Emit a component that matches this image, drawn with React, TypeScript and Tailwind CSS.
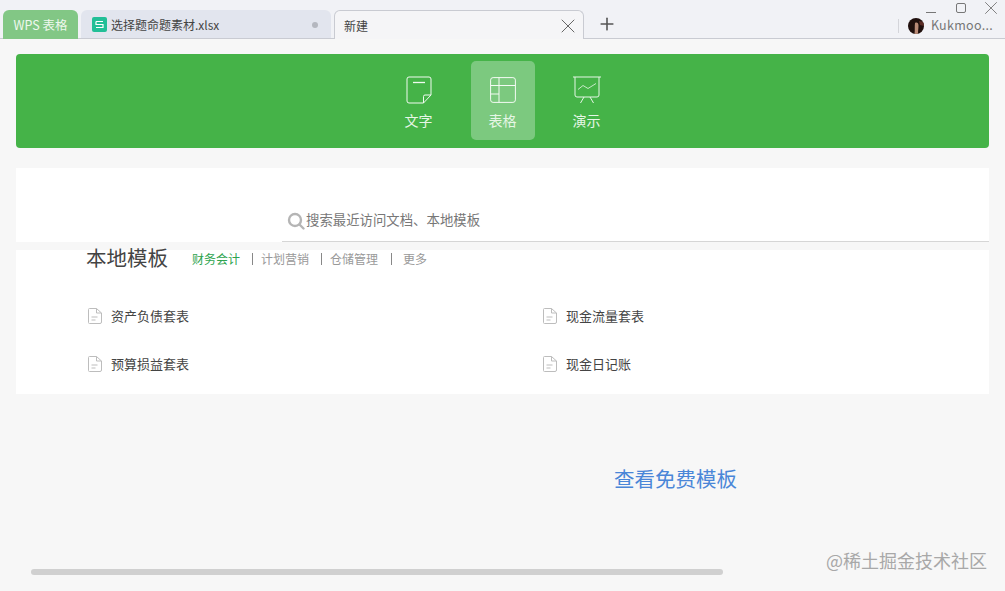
import { Plus, X } from "lucide-react";

const FONT = "font-['Noto_Sans_CJK_SC','Noto_Sans',sans-serif]";

function WriterIcon() {
  return (
    <svg width="26" height="28" viewBox="0 0 26 28" fill="none" stroke="#f0faf0" strokeWidth="1">
      <path d="M3 1h20a2 2 0 0 1 2 2v16l-7.5 8H3a2 2 0 0 1-2-2V3a2 2 0 0 1 2-2z" />
      <path d="M25 19h-6a1.5 1.5 0 0 0-1.5 1.5V27" />
      <path d="M7 6.500h12" strokeWidth="1.3" />
    </svg>
  );
}

function SheetIcon() {
  return (
    <svg width="26" height="26" viewBox="0 0 26 26" fill="none" stroke="#f4fbf4" strokeWidth="1">
      <rect x="0.6" y="0.6" width="24.8" height="24.8" rx="2.5" />
      <path d="M0.6 8.5h24.8M0.6 17h8.4M9 0.6v24.8" />
    </svg>
  );
}

function SlideIcon() {
  return (
    <svg width="30" height="28" viewBox="0 0 30 28" fill="none" stroke="#e6f6e6" strokeWidth="1">
      <path d="M1 1h28" />
      <path d="M3 1v18a2 2 0 0 0 2 2h20a2 2 0 0 0 2-2V1" />
      <path d="M6 13.5l5-4 5 3 8-5" strokeOpacity="0.8" />
      <path d="M12 21l-3.5 6M18 21l3.5 6" />
    </svg>
  );
}

function FileIcon() {
  return (
    <svg width="14" height="16" viewBox="0 0 14 16" fill="none" stroke="#bdbdbd" strokeWidth="1" className="shrink-0">
      <path d="M1.5 0.5h7l5 4.5v9a1.5 1.5 0 0 1-1.5 1.500H1.500A1 1 0 0 1 0.5 14.5v-13a1 1 0 0 1 1-1z" />
      <path d="M8.5 0.5v4.5h5" />
      <path d="M3.5 9h6M3.5 12h4" />
    </svg>
  );
}

function SheetBadge() {
  return (
    <svg width="15" height="15" viewBox="0 0 15 15" className="shrink-0">
      <rect width="15" height="15" rx="2" fill="#22bf97" />
      <path d="M4 4.500h7M4 4.500v3h7v3H4" fill="none" stroke="#ffffff" strokeWidth="1.2" />
    </svg>
  );
}

function Avatar() {
  return (
    <svg width="16" height="16" viewBox="0 0 16 16" className="shrink-0">
      <clipPath id="avatar-clip">
        <circle cx="8" cy="8" r="8" />
      </clipPath>
      <g clipPath="url(#avatar-clip)">
        <rect width="16" height="16" fill="#20100e" />
        <path d="M7 5c2-1 3.500 0 3.500 2.500S10 12 10 16H6.500c.5-3 0-8 .5-11z" fill="#b98a76" />
        <path d="M11 3l5 1v4l-4-1z" fill="#5b2c26" />
      </g>
    </svg>
  );
}

function AppButton({ label, active, children }: { label: string; active?: boolean; children: React.ReactNode }) {
  return (
    <div className={`flex h-[79px] w-16 flex-col items-center rounded-[5px] pt-[14px] ${active ? "bg-[#7cc97f]" : ""}`}>
      <div className="flex h-[30px] items-center justify-center">{children}</div>
      <span className="mt-[5px] text-[14px] leading-[20px] text-[#e6f6e6]">{label}</span>
    </div>
  );
}

function TemplateRow({ name }: { name: string }) {
  return (
    <div className="flex h-12 items-center gap-[9px] pl-[2px]">
      <FileIcon />
      <span className="text-[13px] text-[#444444]">{name}</span>
    </div>
  );
}

export default function App() {
  return (
    <div className={`relative flex h-[591px] w-[1005px] flex-col overflow-hidden bg-[#f7f7f7] ${FONT}`}>
      {/* title bar + tabs */}
      <div className="relative flex h-[39px] shrink-0 items-end border-b border-[#c9cbd2] bg-[#f1f2f6] pl-[3px]">
        <div className="mb-[-1px] flex h-[29px] w-[75px] items-center justify-center rounded-t-[6px] bg-[#82c785] pt-[2px] text-[12.5px] text-[#eef8ee]">
          WPS 表格
        </div>
        <div className="mb-[-1px] ml-[3px] flex h-[29px] w-[250px] items-center rounded-t-[6px] border-b border-[#c9cbd2] bg-[#e2e5ee] pl-[11px] pr-[13px] pt-[1px]">
          <SheetBadge />
          <span className="ml-[4px] text-[12px] text-[#444444]">选择题命题素材.xlsx</span>
          <div className="ml-auto h-[6px] w-[6px] rounded-full bg-[#b4b7bf]" />
        </div>
        <div className="mb-[-1px] ml-[3px] flex h-[29px] w-[250px] items-center rounded-t-[6px] border border-b-0 border-[#c9cbd2] bg-[#f5f5f7] pl-[9px] pr-[3px] pt-[1px]">
          <span className="text-[12px] text-[#444444]">新建</span>
          <X size={24} strokeWidth={1} className="ml-auto text-[#666666]" />
        </div>
        <div className="flex h-[29px] w-[46px] items-center justify-center">
          <Plus size={20} strokeWidth={1.9} className="text-[#555555]" />
        </div>
        <div className="ml-auto flex h-[29px] items-center pr-[12px] pt-[4px]">
          <div className="h-[14px] w-px bg-[#d4d5da]" />
          <div className="ml-[9px]">
            <Avatar />
          </div>
          <span className="ml-[7px] text-[12.5px] tracking-[0.3px] text-[#777777]">Kukmoo...</span>
        </div>
        {/* window controls */}
        <div className="absolute right-[3px] top-[-3px] flex items-center gap-[14px] text-[#777777]">
          <div className="mt-[8px] mr-[6px] h-px w-[10px] bg-[#777777]" />
          <div className="h-[10px] w-[10px] rounded-[2px] border border-[#777777]" />
          <X size={22} strokeWidth={1} />
        </div>
      </div>

      {/* green app switcher */}
      <div className="mx-4 mt-[15px] flex h-[94px] shrink-0 items-start justify-center gap-5 rounded-[4px] bg-[#45b348] pt-[7px]">
        <AppButton label="文字">
          <WriterIcon />
        </AppButton>
        <AppButton label="表格" active>
          <SheetIcon />
        </AppButton>
        <AppButton label="演示">
          <SlideIcon />
        </AppButton>
      </div>

      {/* search */}
      <div className="mx-4 mt-5 flex h-[74px] shrink-0 items-end bg-white pl-[266px]">
        <div className="flex h-[43px] flex-1 items-center border-b border-[#d6d6d6] pb-[2px] pl-[5px]">
          <svg width="18" height="18" viewBox="0 0 18 18" fill="none" stroke="#b5b5b5" strokeWidth="2.4" className="mt-[4px]">
            <circle cx="8" cy="8" r="6" />
            <path d="M12.5 12.5l4 4" strokeLinecap="round" />
          </svg>
          <span className="ml-[1px] text-[13.4px] text-[#777777]">搜索最近访问文档、本地模板</span>
        </div>
      </div>

      {/* local templates */}
      <div className="mx-4 mt-2 h-[144px] shrink-0 bg-white pl-[70px]">
        <div className="flex h-[14px] items-center">
          <span className="w-[106px] text-[20.5px] leading-4 text-[#444444]">本地模板</span>
          <div className="flex items-center pt-[4px] text-[12px] text-[#999999]">
            <span className="text-[#2ea44f]">财务会计</span>
            <div className="ml-[12px] mr-[8px] h-3 w-px bg-[#888888]" />
            <span>计划营销</span>
            <div className="ml-[12px] mr-[8px] h-3 w-px bg-[#888888]" />
            <span>仓储管理</span>
            <div className="ml-[13px] mr-[11px] h-3 w-px bg-[#888888]" />
            <span>更多</span>
          </div>
        </div>
        <div className="mt-[28px] grid w-[910px] grid-cols-2">
          <TemplateRow name="资产负债套表" />
          <TemplateRow name="现金流量套表" />
          <TemplateRow name="预算损益套表" />
          <TemplateRow name="现金日记账" />
        </div>
      </div>

      {/* free templates link */}
      <div className="mt-[69px] pl-[614px] text-[20.5px] leading-[30px] text-[#4a86d8]">查看免费模板</div>

      {/* scrollbar */}
      <div className="ml-[31px] mt-[76px] h-[6px] w-[692px] rounded-full bg-[#d0d0d0]" />

      {/* watermark */}
      <div className="absolute bottom-[18px] right-[18px] text-[18px] leading-[26px] text-[#a8a8a8]">@稀土掘金技术社区</div>
    </div>
  );
}
